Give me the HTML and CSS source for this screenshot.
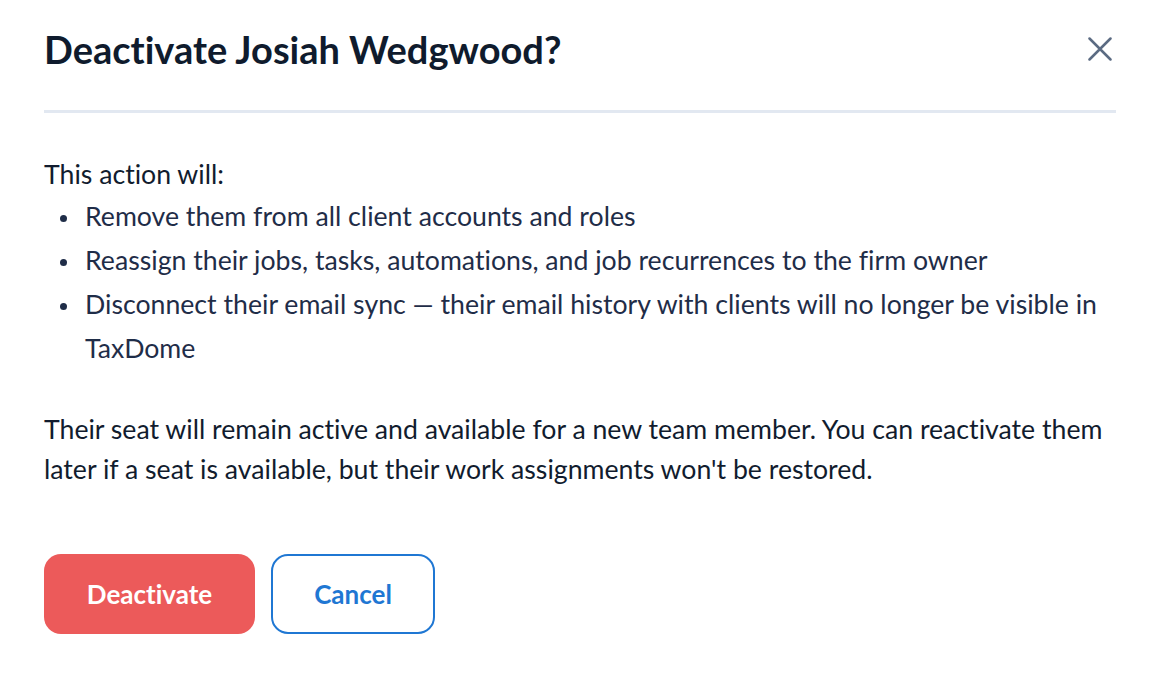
FILE: index.html
```html
<!DOCTYPE html>
<html lang="en">
<head>
<meta charset="utf-8">
<title>Deactivate Josiah Wedgwood?</title>
<link rel="stylesheet" href="styles.css">
</head>
<body>
<div class="modal">
  <header class="modal-header">
    <h1 class="modal-title">Deactivate Josiah Wedgwood?</h1>
    <button class="close-btn" type="button" aria-label="Close">
      <svg width="24" height="24" viewBox="0 0 24 24" fill="none">
        <path d="M1.5 1.5L22.5 22.5M22.5 1.5L1.5 22.5" stroke="#5b6b82" stroke-width="2.5" stroke-linecap="round"/>
      </svg>
    </button>
  </header>
  <div class="modal-body">
    <p class="intro">This action will:</p>
    <ul class="effects">
      <li>Remove them from all client accounts and roles</li>
      <li>Reassign their jobs, tasks, automations, and job recurrences to the firm owner</li>
      <li>Disconnect their email sync — their email history with clients will no longer be visible in TaxDome</li>
    </ul>
    <p class="note">Their seat will remain active and available for a new team member. You can reactivate them later if a seat is available, but their work assignments won't be restored.</p>
  </div>
  <footer class="modal-actions">
    <button class="btn btn-danger" type="button">Deactivate</button>
    <button class="btn btn-outline" type="button">Cancel</button>
  </footer>
</div>
</body>
</html>
```
FILE: styles.css
```css
* { box-sizing: border-box; }

html, body {
  margin: 0;
  background: #ffffff;
}

body {
  font-family: "Lato", "Liberation Sans", sans-serif;
  font-variant-ligatures: none;
  font-feature-settings: "liga" 0, "clig" 0, "dlig" 0, "calt" 0;
  color: #111c2e;
}

.modal {
  width: 1072px;
  margin-left: 44px;
  padding-top: 25px;
}

.modal-header {
  display: flex;
  align-items: center;
  justify-content: space-between;
  padding-bottom: 37px;
  border-bottom: 3px solid #e2e8f1;
}

.modal-title {
  margin: 0;
  font-size: 38px;
  line-height: 48px;
  font-weight: 700;
  color: #0f1b2d;
}

.close-btn {
  width: 32px;
  height: 32px;
  padding: 0;
  border: 0;
  background: transparent;
  display: flex;
  align-items: center;
  justify-content: center;
  cursor: pointer;
}

.modal-body {
  padding-top: 41px;
  font-size: 26.67px;
}

.intro {
  margin: 0;
  line-height: 40px;
  color: #111c2e;
}

.effects {
  margin: 0;
  padding: 0;
  list-style: none;
  line-height: 44px;
  color: #1f2d48;
}

.effects li {
  display: grid;
  grid-template-columns: 41px 1fr;
}

.effects li::before {
  content: "";
  width: 7px;
  height: 7px;
  margin: 21px 0 0 16px;
  border-radius: 50%;
  background: #1f2d48;
}

.note {
  margin: 39px 0 0;
  line-height: 40px;
  color: #111c2e;
}

.modal-actions {
  display: flex;
  gap: 16px;
  margin-top: 65px;
}

.btn {
  height: 80px;
  border-radius: 17px;
  font-family: inherit;
  font-variant-ligatures: none;
  font-feature-settings: "liga" 0, "clig" 0, "dlig" 0, "calt" 0;
  font-size: 26px;
  font-weight: 700;
  display: flex;
  align-items: center;
  justify-content: center;
  cursor: pointer;
}

.btn-danger {
  width: 211px;
  border: 0;
  background: #ec5a5a;
  color: #ffffff;
}

.btn-outline {
  width: 164px;
  border: 2px solid #1f77d3;
  background: #ffffff;
  color: #1f77d3;
}
```
